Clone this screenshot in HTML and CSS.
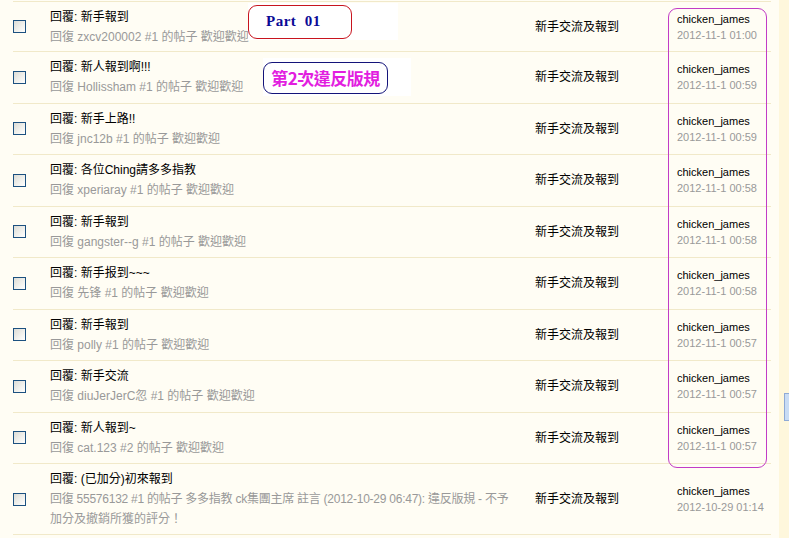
FILE: index.html
```html
<!DOCTYPE html>
<html>
<head>
<meta charset="utf-8">
<link rel="stylesheet" href="styles.css">
</head>
<body>
<div class="page">
  <div class="list">
    <div class="row first">
      <span class="cb"></span>
      <div class="topic"><div class="title">回覆: 新手報到</div><div class="sub">回復 zxcv200002 #1 的帖子 歡迎歡迎</div></div>
      <div class="forum">新手交流及報到</div>
      <div class="by"><div class="author">chicken_james</div><div class="date">2012-11-1 01:00</div></div>
    </div>
    <div class="row">
      <span class="cb"></span>
      <div class="topic"><div class="title">回覆: 新人報到啊!!!</div><div class="sub">回復 Hollissham #1 的帖子 歡迎歡迎</div></div>
      <div class="forum">新手交流及報到</div>
      <div class="by"><div class="author">chicken_james</div><div class="date">2012-11-1 00:59</div></div>
    </div>
    <div class="row">
      <span class="cb"></span>
      <div class="topic"><div class="title">回覆: 新手上路!!</div><div class="sub">回復 jnc12b #1 的帖子 歡迎歡迎</div></div>
      <div class="forum">新手交流及報到</div>
      <div class="by"><div class="author">chicken_james</div><div class="date">2012-11-1 00:59</div></div>
    </div>
    <div class="row">
      <span class="cb"></span>
      <div class="topic"><div class="title">回覆: 各位Ching請多多指教</div><div class="sub">回復 xperiaray #1 的帖子 歡迎歡迎</div></div>
      <div class="forum">新手交流及報到</div>
      <div class="by"><div class="author">chicken_james</div><div class="date">2012-11-1 00:58</div></div>
    </div>
    <div class="row">
      <span class="cb"></span>
      <div class="topic"><div class="title">回覆: 新手報到</div><div class="sub">回復 gangster--g #1 的帖子 歡迎歡迎</div></div>
      <div class="forum">新手交流及報到</div>
      <div class="by"><div class="author">chicken_james</div><div class="date">2012-11-1 00:58</div></div>
    </div>
    <div class="row">
      <span class="cb"></span>
      <div class="topic"><div class="title">回覆: 新手报到~~~</div><div class="sub">回復 先锋 #1 的帖子 歡迎歡迎</div></div>
      <div class="forum">新手交流及報到</div>
      <div class="by"><div class="author">chicken_james</div><div class="date">2012-11-1 00:58</div></div>
    </div>
    <div class="row">
      <span class="cb"></span>
      <div class="topic"><div class="title">回覆: 新手報到</div><div class="sub">回復 polly #1 的帖子 歡迎歡迎</div></div>
      <div class="forum">新手交流及報到</div>
      <div class="by"><div class="author">chicken_james</div><div class="date">2012-11-1 00:57</div></div>
    </div>
    <div class="row">
      <span class="cb"></span>
      <div class="topic"><div class="title">回覆: 新手交流</div><div class="sub">回復 diuJerJerC忽 #1 的帖子 歡迎歡迎</div></div>
      <div class="forum">新手交流及報到</div>
      <div class="by"><div class="author">chicken_james</div><div class="date">2012-11-1 00:57</div></div>
    </div>
    <div class="row">
      <span class="cb"></span>
      <div class="topic"><div class="title">回覆: 新人報到~</div><div class="sub">回復 cat.123 #2 的帖子 歡迎歡迎</div></div>
      <div class="forum">新手交流及報到</div>
      <div class="by"><div class="author">chicken_james</div><div class="date">2012-11-1 00:57</div></div>
    </div>
    <div class="row tall">
      <span class="cb"></span>
      <div class="topic"><div class="title">回覆: (已加分)初來報到</div><div class="sub"><span class="narrow">回復 55576132 #1 的帖子 多多指教 ck集團主席 註言 (2012-10-29 06:47): 違反版規 - 不予</span><br>加分及撤銷所獲的評分！</div></div>
      <div class="forum">新手交流及報到</div>
      <div class="by"><div class="author">chicken_james</div><div class="date">2012-10-29 01:14</div></div>
    </div>
  </div>
  <div class="strip"><span class="scrollbit"></span></div>
</div>
<div class="note note-part"><span class="part-box">Part&nbsp;&nbsp;01</span></div>
<div class="note note-vio"><span class="vio-box">第2次違反版規</span></div>
<div class="note ring"></div>
</body>
</html>
```
FILE: styles.css
```css
html, body {
  margin: 0;
  padding: 0;
  background: #fffdf4;
}
body {
  width: 789px;
  height: 538px;
  overflow: hidden;
  font-family: "Liberation Sans", "Noto Sans CJK TC", sans-serif;
  font-size: 12px;
  color: #000;
  position: relative;
}
.page {
  display: flex;
  height: 538px;
}
.list {
  margin-left: 13px;
  width: 758px;
  margin-top: 1px;
  border-top: 1px solid #f1e9c9;
}
.strip {
  margin-left: 8px;
  flex: 1;
  background: #fef7dc;
  position: relative;
}
.scrollbit {
  position: absolute;
  left: 5px;
  top: 393px;
  width: 6px;
  height: 26px;
  background: #c9dcf4;
  border: 1px solid #8faad6;
  border-right: none;
}
.row {
  box-sizing: border-box;
  height: 51.5px;
  border-bottom: 1px solid #f1e9c9;
  display: grid;
  grid-template-columns: 37px 485px 142px 1fr;
  align-items: center;
}
.row.first {
  height: 50px;
}
.row.tall {
  height: 71px;
}
.cb {
  display: block;
  width: 11px;
  height: 11px;
  border: 1px solid #1c5180;
  background: linear-gradient(135deg, #dcdcd6 0%, #f2f2ee 60%, #ffffff 100%);
}
.title {
  line-height: 20px;
  color: #000;
}
.sub {
  line-height: 20px;
  color: #999;
}
.narrow {
  letter-spacing: -0.25px;
}
.forum {
  color: #000;
  padding-bottom: 3px;
}
.by {
  font-size: 11px;
}
.author {
  line-height: 16px;
  color: #000;
}
.date {
  line-height: 16px;
  color: #999;
}
.note {
  position: absolute;
}
.note-part {
  left: 248px;
  top: 3px;
  width: 150px;
  height: 37px;
  background: #fff;
}
.part-box {
  position: absolute;
  left: 0;
  top: 2px;
  box-sizing: border-box;
  width: 104px;
  height: 34px;
  border: 1px solid #c8141e;
  border-radius: 9px;
  background: #fff;
  font-family: "Liberation Serif", "DejaVu Serif", serif;
  font-weight: bold;
  font-size: 15px;
  letter-spacing: 0.5px;
  color: #0a0a96;
  padding-left: 17px;
  line-height: 30px;
}
.note-vio {
  left: 263px;
  top: 58px;
  width: 148px;
  height: 38px;
  background: #fff;
}
.vio-box {
  position: absolute;
  left: 0;
  top: 4px;
  box-sizing: border-box;
  width: 125px;
  height: 32px;
  border: 1px solid #14147a;
  border-radius: 9px;
  background: #fff;
  font-family: "Noto Sans CJK TC", sans-serif;
  font-weight: bold;
  font-size: 17px;
  color: #e21ee0;
  text-align: center;
  line-height: 29px;
  letter-spacing: -0.5px;
}
.ring {
  left: 668px;
  top: 8px;
  box-sizing: border-box;
  width: 99px;
  height: 460px;
  border: 1px solid #c23cc6;
  border-radius: 9px;
}
```
